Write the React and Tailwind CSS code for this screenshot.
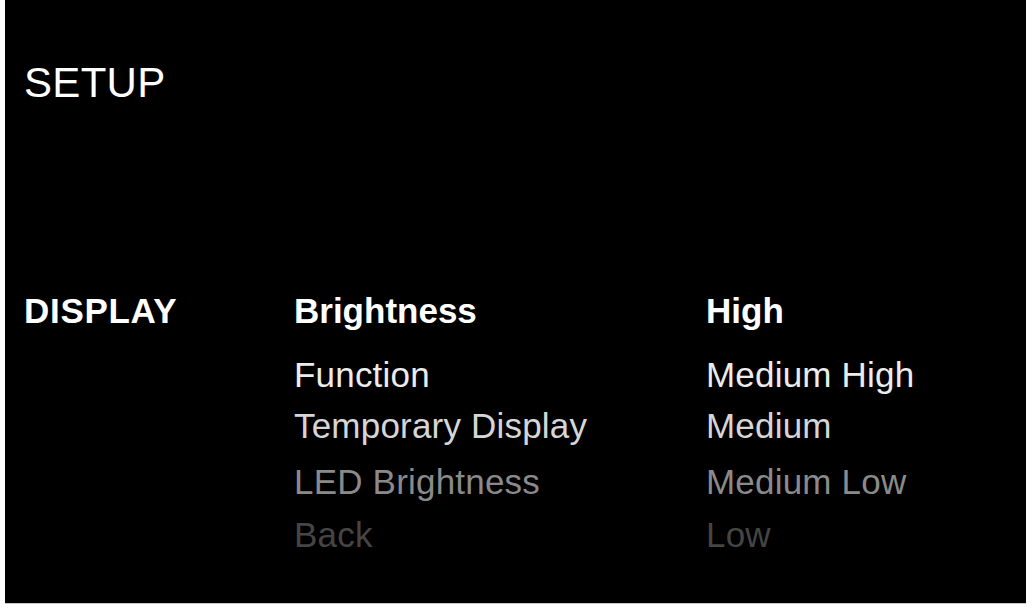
import React from 'react';

// Setup menu screen: category column, option list and value list
const options = [
  { label: 'Function', value: 'Medium High', color: 'text-[#ececec]', mt: 'mt-[29px]' },
  { label: 'Temporary Display', value: 'Medium', color: 'text-[#d6d6d6]', mt: 'mt-[16px]' },
  { label: 'LED Brightness', value: 'Medium Low', color: 'text-[#8a8a8a]', mt: 'mt-[21px]' },
  { label: 'Back', value: 'Low', color: 'text-[#454545]', mt: 'mt-[18px]' },
];

export default function App() {
  return (
    <div
      className="w-[1033px] h-[608px] bg-white overflow-hidden"
      style={{ fontFamily: '"Liberation Sans", Arial, sans-serif' }}
    >
      <div className="ml-[5px] w-[1021px] h-[604px] bg-black border-b border-[#c8c8c8] pl-[19px] pt-[62px]">
        <div className="text-[42px] leading-none text-white tracking-[0.3px]">SETUP</div>

        <div className="mt-[189px] grid grid-cols-[270px_412px_1fr]">
          {/* selected row */}
          <div className="text-[35px] leading-none font-bold text-white tracking-[0.7px]">DISPLAY</div>
          <div className="text-[35px] leading-none font-bold text-white">Brightness</div>
          <div className="text-[35px] leading-none font-bold text-white">High</div>

          {options.map((o) => (
            <React.Fragment key={o.label}>
              <div className={o.mt}></div>
              <div className={`${o.mt} ${o.color} text-[35px] leading-none tracking-[0.2px]`}>{o.label}</div>
              <div className={`${o.mt} ${o.color} text-[35px] leading-none tracking-[0.2px]`}>{o.value}</div>
            </React.Fragment>
          ))}
        </div>
      </div>
    </div>
  );
}
